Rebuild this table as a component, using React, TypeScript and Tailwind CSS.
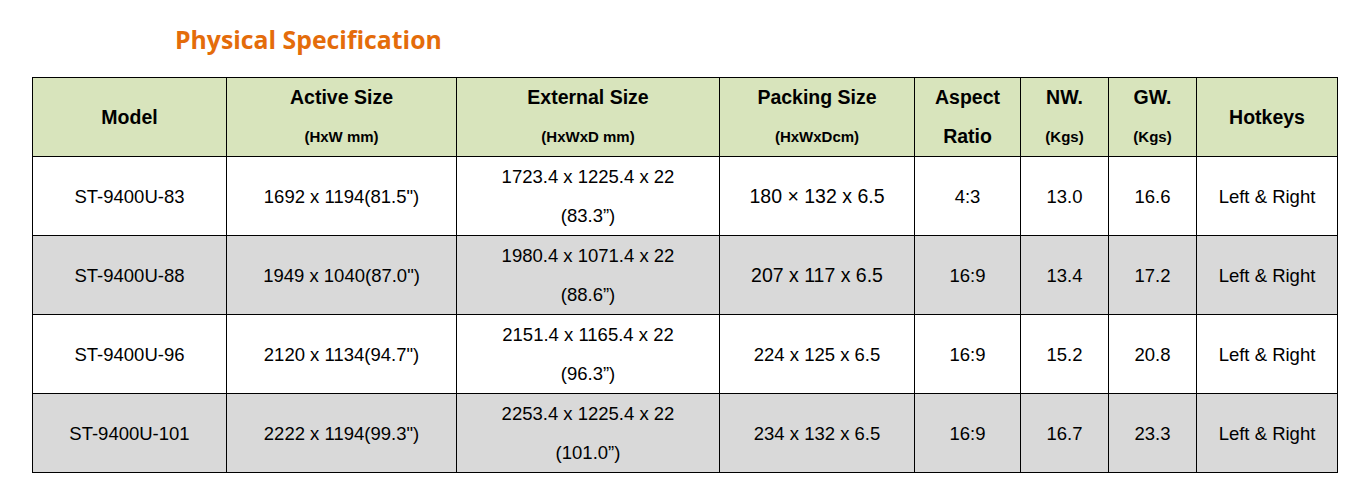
import React from "react";

const rows = [
  { m: "ST-9400U-83", a: "1692 x 1194(81.5\")", e1: "1723.4 x 1225.4 x 22", e2: "(83.3”)", p: "180 × 132 x 6.5", big: true, r: "4:3", nw: "13.0", gw: "16.6", h: "Left & Right", gray: false },
  { m: "ST-9400U-88", a: "1949 x 1040(87.0\")", e1: "1980.4 x 1071.4 x 22", e2: "(88.6”)", p: "207 x 117 x 6.5", big: true, r: "16:9", nw: "13.4", gw: "17.2", h: "Left & Right", gray: true },
  { m: "ST-9400U-96", a: "2120 x 1134(94.7\")", e1: "2151.4 x 1165.4 x 22", e2: "(96.3”)", p: "224 x 125 x 6.5", big: false, r: "16:9", nw: "15.2", gw: "20.8", h: "Left & Right", gray: false },
  { m: "ST-9400U-101", a: "2222 x 1194(99.3\")", e1: "2253.4 x 1225.4 x 22", e2: "(101.0”)", p: "234 x 132 x 6.5", big: false, r: "16:9", nw: "16.7", gw: "23.3", h: "Left & Right", gray: true },
];

const th = "border border-black text-center align-middle font-bold p-0";
const td = "border border-black text-center align-middle p-0 h-[78px]";

export default function App() {
  return (
    <div className="w-[1363px] h-[501px] bg-white" style={{ fontFamily: '"Liberation Sans", Arial, sans-serif' }}>
      <div className="pl-[175px] pt-[22px] h-[77px]">
        <h1 className="text-[#e46c0a] font-bold text-[24.8px] leading-[34px]" style={{ fontFamily: '"Open Sans", sans-serif' }}>
          Physical Specification
        </h1>
      </div>
      <table className="ml-[32px] w-[1305px] table-fixed border-collapse text-black text-[18.5px] leading-[39px]">
        <colgroup>
          <col className="w-[194px]" />
          <col className="w-[230px]" />
          <col className="w-[263px]" />
          <col className="w-[195px]" />
          <col className="w-[106px]" />
          <col className="w-[88px]" />
          <col className="w-[88px]" />
          <col className="w-[141px]" />
        </colgroup>
        <thead>
          <tr className="bg-[#d8e4bc] h-[78px]">
            <th className={th + " text-[19.5px]"}>Model</th>
            <th className={th}>
              <div className="text-[19.5px] leading-[39px]">Active Size</div>
              <div className="text-[15px] leading-[39px]">(HxW mm)</div>
            </th>
            <th className={th}>
              <div className="text-[19.5px] leading-[39px]">External Size</div>
              <div className="text-[15px] leading-[39px]">(HxWxD mm)</div>
            </th>
            <th className={th}>
              <div className="text-[19.5px] leading-[39px]">Packing Size</div>
              <div className="text-[15px] leading-[39px]">(HxWxDcm)</div>
            </th>
            <th className={th}>
              <div className="text-[19.5px] leading-[39px]">Aspect</div>
              <div className="text-[19.5px] leading-[39px]">Ratio</div>
            </th>
            <th className={th}>
              <div className="text-[19.5px] leading-[39px]">NW.</div>
              <div className="text-[15px] leading-[39px]">(Kgs)</div>
            </th>
            <th className={th}>
              <div className="text-[19.5px] leading-[39px]">GW.</div>
              <div className="text-[15px] leading-[39px]">(Kgs)</div>
            </th>
            <th className={th + " text-[19.5px]"}>Hotkeys</th>
          </tr>
        </thead>
        <tbody>
          {rows.map((r) => (
            <tr key={r.m} className={r.gray ? "bg-[#d9d9d9]" : "bg-white"}>
              <td className={td}>{r.m}</td>
              <td className={td}>{r.a}</td>
              <td className={td}>
                <div>{r.e1}</div>
                <div>{r.e2}</div>
              </td>
              <td className={r.big ? td + " text-[19.5px]" : td}>{r.p}</td>
              <td className={td}>{r.r}</td>
              <td className={td}>{r.nw}</td>
              <td className={td}>{r.gw}</td>
              <td className={td}>{r.h}</td>
            </tr>
          ))}
        </tbody>
      </table>
    </div>
  );
}
